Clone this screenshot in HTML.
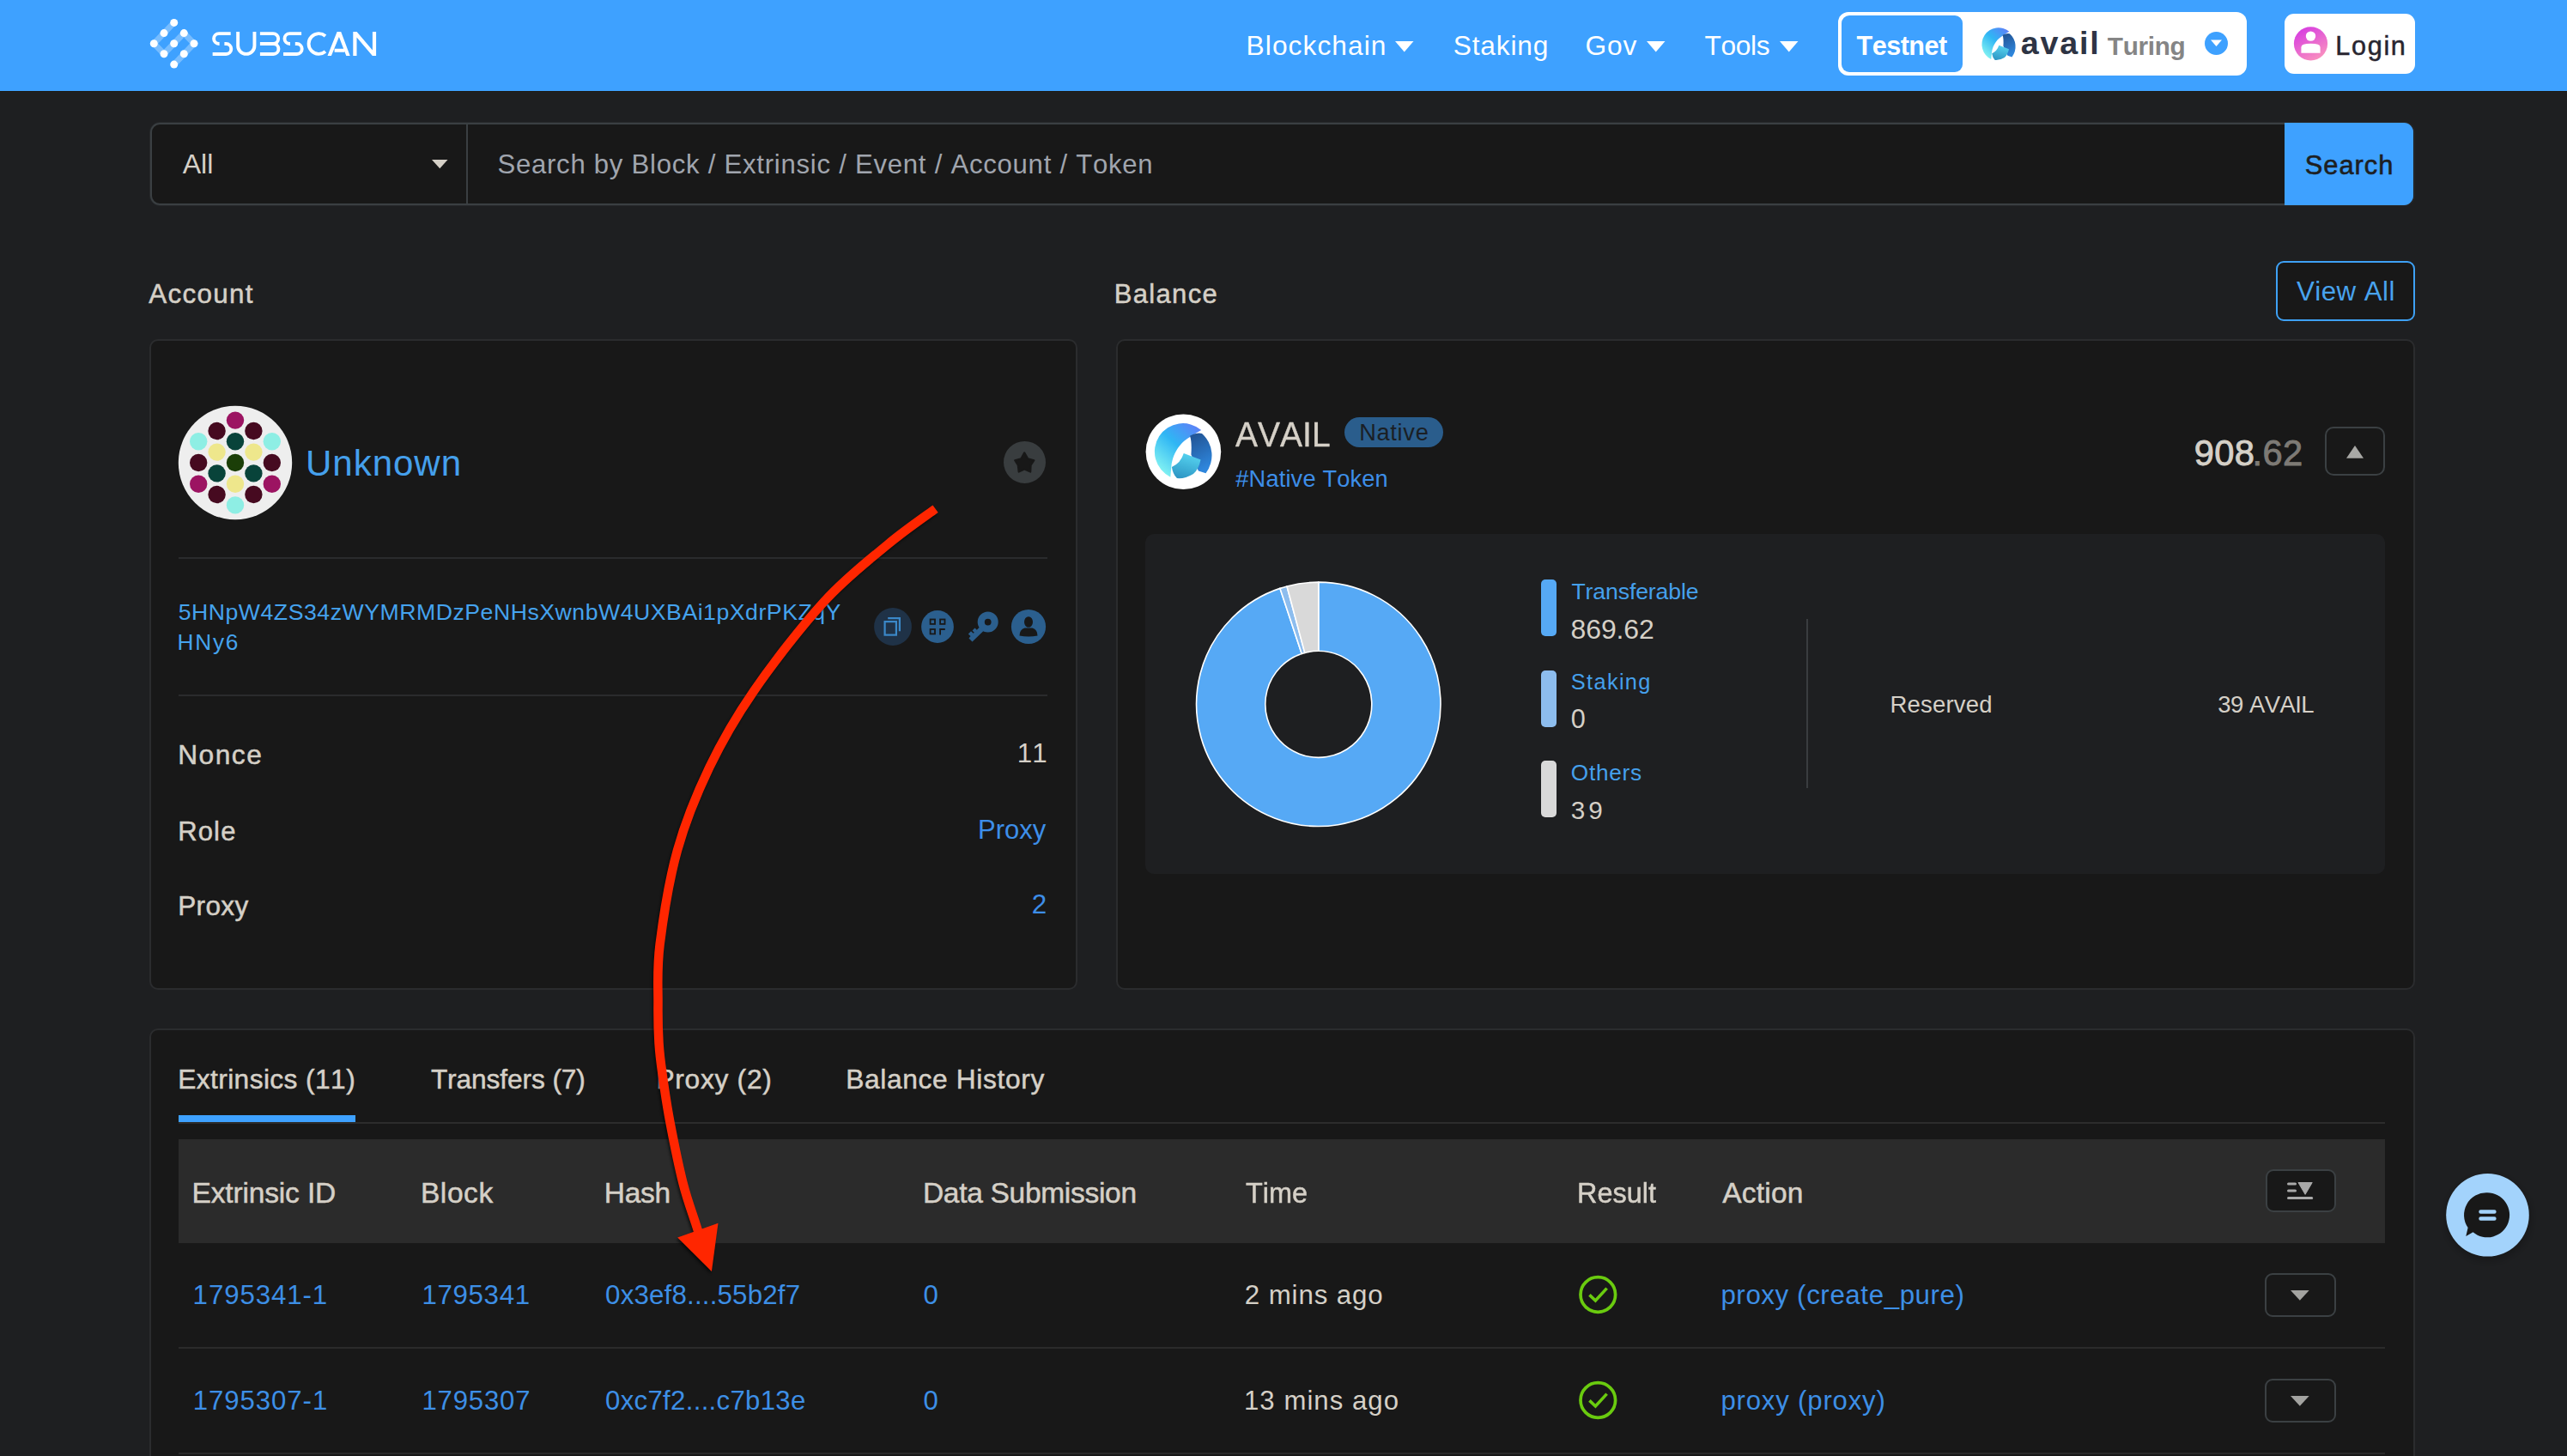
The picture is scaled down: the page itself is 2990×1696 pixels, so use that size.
<!DOCTYPE html><html><head><meta charset="utf-8"><style>
html,body{margin:0;padding:0;}
body{width:2990px;height:1696px;overflow:hidden;position:relative;background:#1e1f21;font-family:"Liberation Sans",sans-serif;}
.t{position:absolute;white-space:pre;font-kerning:none;font-feature-settings:"kern" 0;}
.r{position:absolute;box-sizing:border-box;}
svg{position:absolute;overflow:visible;}
</style></head><body>
<div class="r" style="left:0.00px;top:0.00px;width:2990.00px;height:106.00px;background:#3ea1ff"></div>
<div class="r" style="left:0.00px;top:106.00px;width:2990.00px;height:1.00px;background:#1c1a15"></div>
<svg style="left:0;top:0" width="500" height="105" viewBox="0 0 500 105">
<path d="M202.7,26.4 L179.3,50.7 L191,62.8 L214.3,38.6 L226,50.7 L202.7,75.1" fill="none" stroke="rgba(255,255,255,0.3)" stroke-width="7" stroke-linejoin="miter"/>
<g fill="#fff">
<circle cx="202.7" cy="26.4" r="4.5"/><circle cx="191" cy="38.6" r="4.5"/><circle cx="214.3" cy="38.6" r="4.5"/>
<circle cx="179.3" cy="50.7" r="4.5"/><circle cx="202.7" cy="50.7" r="4.5"/><circle cx="226" cy="50.7" r="4.5"/>
<circle cx="191" cy="62.8" r="4.5"/><circle cx="214.3" cy="62.8" r="4.5"/><circle cx="202.7" cy="75.1" r="4.5"/>
</g>
<g fill="none" stroke="#fff" stroke-width="3.9" stroke-linecap="butt">
<path d="M268.7,39.1 H255 A5.9,5.9 0 0 0 255,50.95 H255.6 M261.4,51.05 H263.35 A5.95,5.95 0 0 1 263.35,62.95 H247.65"/>
<path d="M277.15,37.1 V53.2 A9.65,9.65 0 0 0 296.45,53.2 V37.1"/>
<path d="M302.9,39.1 H318.2 A5.97,5.97 0 0 1 318.2,51.05 H302.9 M318.5,51.05 A5.95,5.95 0 0 1 318.5,62.95 H302.9"/>
<path d="M351.1,39.1 H337.4 A5.9,5.9 0 0 0 337.4,50.95 H338 M343.8,51.05 H345.75 A5.95,5.95 0 0 1 345.75,62.95 H330.05"/>
<path d="M379,41.9 A11.85,11.85 0 1 0 379,60.1"/>
</g>
<path fill="#fff" d="M381.5,64.9 L392.6,37.1 L397.2,37.1 L407.7,64.9 L403.3,64.9 L394.9,42.9 L385.9,64.9 Z M389.6,56.7 H401.2 V60.8 H389.6 Z"/>
<path fill="#fff" d="M411.3,64.9 V37.1 H415.6 L433.9,58.6 V37.1 H438.1 V64.9 H433.8 L415.5,43.4 V64.9 Z"/>
</svg>
<div class="t" style="left:1451.60px;top:38.00px;font-size:31.70px;line-height:31.70px;letter-spacing:1.063px;color:#ffffff;">Blockchain</div>
<svg style="left:1625px;top:48px" width="22" height="13" viewBox="0 0 22 13"><path d="M0,0 H21.5 L10.75,12.5 Z" fill="#fff"/></svg>
<div class="t" style="left:1692.76px;top:38.00px;font-size:31.70px;line-height:31.70px;letter-spacing:0.809px;color:#ffffff;">Staking</div>
<div class="t" style="left:1846.61px;top:38.00px;font-size:31.70px;line-height:31.70px;letter-spacing:0.833px;color:#ffffff;">Gov</div>
<svg style="left:1918px;top:48px" width="22" height="13" viewBox="0 0 22 13"><path d="M0,0 H21.5 L10.75,12.5 Z" fill="#fff"/></svg>
<div class="t" style="left:1985.49px;top:38.00px;font-size:31.70px;line-height:31.70px;letter-spacing:-0.364px;color:#ffffff;">Tools</div>
<svg style="left:2072.5px;top:48px" width="22" height="13" viewBox="0 0 22 13"><path d="M0,0 H21.5 L10.75,12.5 Z" fill="#fff"/></svg>
<div class="r" style="left:2141.00px;top:14.00px;width:476.00px;height:74.00px;background:#fff;border-radius:12px"></div>
<div class="r" style="left:2145.00px;top:18.00px;width:141.00px;height:66.00px;background:#3ea1ff;border-radius:9px"></div>
<div class="t" style="left:2162.46px;top:38.00px;font-size:30.58px;line-height:30.58px;letter-spacing:-0.503px;color:#ffffff;font-weight:bold;">Testnet</div>
<svg style="left:2300px;top:25px" width="60" height="55" viewBox="2300 25 60 55"><defs>
<linearGradient id="hlA" x1="0.8" y1="0" x2="0.1" y2="0.9"><stop offset="0" stop-color="#5a84f7"/><stop offset="0.45" stop-color="#2fb6f4"/><stop offset="1" stop-color="#86f5f2"/></linearGradient>
<linearGradient id="hlB" x1="0" y1="0" x2="0.3" y2="1"><stop offset="0" stop-color="#21508f"/><stop offset="1" stop-color="#2e86dc"/></linearGradient>
<linearGradient id="hlC" x1="0.6" y1="0" x2="0.3" y2="1"><stop offset="0" stop-color="#56d3f0"/><stop offset="1" stop-color="#2d96c4"/></linearGradient>
</defs>
<g transform="translate(2328,51.8) scale(0.588)">
<path fill="url(#hlA)" d="M21,-25.4 A33,33 0 1 0 -14.9,29.4 L-13.9,17.6 C-12,-2 0,-13 7.8,-17.3 Q13,-21 21,-25.4 Z"/>
<path fill="url(#hlB)" d="M7.8,-18.6 Q16.8,-23.3 21.8,-21.3 A34,34 0 0 1 26.3,24.9 L17.7,22.2 L9.2,3.1 Q10.3,-11.3 7.8,-18.6 Z"/>
<path fill="url(#hlC)" d="M0.6,1.8 L20.4,9.1 Q17.8,20.7 11.8,25.7 Q1.8,31.7 -7.3,30.8 Q-12.2,25.7 -13.3,17.6 Q-3.2,13.7 0.6,1.8 Z"/>
</g></svg>
<div class="t" style="left:2353.70px;top:32.00px;font-size:37.65px;line-height:37.65px;letter-spacing:1.833px;color:#2e3444;font-weight:bold;">avail</div>
<div class="t" style="left:2454.87px;top:39.00px;font-size:29.74px;line-height:29.74px;letter-spacing:-0.333px;color:#858585;font-weight:bold;">Turing</div>
<svg style="left:2568px;top:37.4px" width="27" height="27" viewBox="0 0 27 27"><circle cx="13.5" cy="13.5" r="13.5" fill="#3ea1ff"/><path d="M7,9.5 H20 L13.5,17 Z" fill="#fff"/></svg>
<div class="r" style="left:2661.00px;top:16.00px;width:152.00px;height:70.00px;background:#fff;border-radius:11px"></div>
<svg style="left:2671px;top:30px" width="42" height="42" viewBox="0 0 42 42">
<defs><linearGradient id="lg1" x1="0.2" y1="0" x2="0.8" y2="1"><stop offset="0" stop-color="#d63ae2"/><stop offset="1" stop-color="#fb95bd"/></linearGradient></defs>
<circle cx="20.5" cy="20.8" r="19.6" fill="url(#lg1)"/>
<circle cx="20.5" cy="12.1" r="5.7" fill="#fff"/>
<path d="M9.4,31.7 V25 Q9.4,20.8 20.5,20.8 Q31.6,20.8 31.6,25 V31.7 Z" fill="#fff"/>
</svg>
<div class="t" style="left:2720.29px;top:38.00px;font-size:30.58px;line-height:30.58px;letter-spacing:1.695px;color:#28252f;-webkit-text-stroke:0.50px #28252f;">Login</div>
<div class="r" style="left:173.50px;top:141.50px;width:2639.50px;height:98.50px;border:1.5px solid #27292b;border-radius:12px"></div>
<div class="r" style="left:175.00px;top:143.00px;width:2636.00px;height:95.50px;background:#181818;border:2px solid #3a3f42;border-radius:11px"></div>
<div class="r" style="left:542.90px;top:145.00px;width:2.00px;height:91.50px;background:#3a3f42"></div>
<div class="t" style="left:212.64px;top:175.00px;font-size:32.12px;line-height:32.12px;letter-spacing:0.008px;color:#d5d0c7;">All</div>
<svg style="left:502.8px;top:185.8px" width="19" height="11" viewBox="0 0 19 11"><path d="M0,0 H18.5 L9.25,10.3 Z" fill="#d5d0c7"/></svg>
<div class="t" style="left:579.39px;top:176.00px;font-size:31.14px;line-height:31.14px;letter-spacing:0.740px;color:#a0a5ae;">Search by Block / Extrinsic / Event / Account / Token</div>
<div class="r" style="left:2661.00px;top:143.00px;width:150.00px;height:95.50px;background:#3ea1ff;border-radius:0 11px 11px 0"></div>
<div class="t" style="left:2684.80px;top:178.00px;font-size:30.86px;line-height:30.86px;letter-spacing:0.947px;color:#1d1f22;-webkit-text-stroke:0.60px #1d1f22;">Search</div>
<div class="t" style="left:173.24px;top:327.00px;font-size:31.42px;line-height:31.42px;letter-spacing:1.295px;color:#d5d0c7;-webkit-text-stroke:0.50px #d5d0c7;">Account</div>
<div class="t" style="left:1297.66px;top:327.00px;font-size:31.00px;line-height:31.00px;letter-spacing:1.350px;color:#d5d0c7;-webkit-text-stroke:0.50px #d5d0c7;">Balance</div>
<div class="r" style="left:2651.00px;top:304.00px;width:162.00px;height:69.50px;background:#181818;border:2px solid #3ea1f5;border-radius:9px"></div>
<div class="t" style="left:2674.96px;top:324.00px;font-size:31.28px;line-height:31.28px;letter-spacing:0.455px;color:#48a3ee;">View All</div>
<div class="r" style="left:173.50px;top:395.00px;width:1081.00px;height:758.00px;background:#181818;border:2px solid #2b2c2e;border-radius:10px"></div>
<svg style="left:0;top:0" width="400" height="700" viewBox="0 0 400 700"><circle cx="274" cy="539" r="66.2" fill="#eeeeee"/><circle cx="274.0" cy="489.6" r="10.2" fill="#9c1462"/><circle cx="252.6" cy="502.0" r="10.2" fill="#460a20"/><circle cx="295.4" cy="502.0" r="10.2" fill="#460a20"/><circle cx="231.2" cy="514.3" r="10.2" fill="#8eeee4"/><circle cx="274.0" cy="514.3" r="10.2" fill="#08433a"/><circle cx="316.8" cy="514.3" r="10.2" fill="#8eeee4"/><circle cx="252.6" cy="526.6" r="10.2" fill="#eee78c"/><circle cx="295.4" cy="526.6" r="10.2" fill="#eee78c"/><circle cx="231.2" cy="539.0" r="10.2" fill="#460a20"/><circle cx="274.0" cy="539.0" r="10.2" fill="#1b3e08"/><circle cx="316.8" cy="539.0" r="10.2" fill="#460a20"/><circle cx="252.6" cy="551.4" r="10.2" fill="#08433a"/><circle cx="295.4" cy="551.4" r="10.2" fill="#08433a"/><circle cx="231.2" cy="563.7" r="10.2" fill="#9c1462"/><circle cx="274.0" cy="563.7" r="10.2" fill="#eee78c"/><circle cx="316.8" cy="563.7" r="10.2" fill="#9c1462"/><circle cx="252.6" cy="576.0" r="10.2" fill="#460a20"/><circle cx="295.4" cy="576.0" r="10.2" fill="#460a20"/><circle cx="274.0" cy="588.4" r="10.2" fill="#8eeee4"/></svg>
<div class="t" style="left:355.95px;top:519.00px;font-size:42.08px;line-height:42.08px;letter-spacing:0.959px;color:#45a0ec;">Unknown</div>
<svg style="left:1160px;top:505px" width="70" height="70" viewBox="1160 505 70 70">
<circle cx="1193.5" cy="538.4" r="24.5" fill="#393d3f"/>
<path d="M1193.2,527.4 L1197.2,534.2 L1204.4,536.2 L1200.6,541.8 L1200.2,549.6 L1193.2,546.6 L1186.7,549.6 L1185.8,541.8 L1182.2,536.2 L1189.4,534.2 Z" fill="#181818" stroke="#181818" stroke-width="2.2" stroke-linejoin="round"/>
</svg>
<div class="r" style="left:208.00px;top:648.80px;width:1012.00px;height:2.00px;background:#2a2b2d"></div>
<div class="t" style="left:207.63px;top:700.00px;font-size:26.65px;line-height:26.65px;letter-spacing:0.526px;color:#45a3ee;">5HNpW4ZS34zWYMRMDzPeNHsXwnbW4UXBAi1pXdrPKZqY</div>
<div class="t" style="left:206.55px;top:735.00px;font-size:26.23px;line-height:26.23px;letter-spacing:1.773px;color:#45a3ee;">HNy6</div>
<svg style="left:1000px;top:690px" width="240" height="80" viewBox="1000 690 240 80">
<circle cx="1040" cy="730" r="21.9" fill="#1f3247"/>
<path d="M1034.2,720.1 H1047.9 V735.3" fill="none" stroke="#3b88c8" stroke-width="2.2"/>
<rect x="1030.6" y="724.1" width="13.3" height="15.5" fill="none" stroke="#3b88c8" stroke-width="2.2"/>
<circle cx="1092" cy="730" r="18.9" fill="#2b5f8e"/>
<g fill="none" stroke="#181818" stroke-width="1.8">
<rect x="1083.6" y="721.5" width="5.4" height="5.4"/><rect x="1095.1" y="721.5" width="5.4" height="5.4"/><rect x="1083.6" y="733" width="5.4" height="5.4"/>
<path d="M1095.1,739.4 V733 H1100.8"/>
</g>
<path fill="#2b5f8e" fill-rule="evenodd" d="M1150.7,712.6 A12,12 0 1 1 1150.7,736.6 A12,12 0 1 1 1150.7,712.6 Z M1150.7,720.7 A3.9,3.9 0 1 0 1150.7,728.5 A3.9,3.9 0 1 0 1150.7,720.7 Z"/>
<path fill="#2b5f8e" d="M1141,730.5 L1145.5,735 L1132.5,747.5 L1128.5,743.5 L1130.5,741 L1127.8,738.5 L1131,735.3 L1133.7,737.8 L1134.8,736.7 L1132.5,734.5 L1135.5,731.5 L1137.8,733.7 Z"/>
<circle cx="1198" cy="730" r="20.1" fill="#2b5f8e"/>
<ellipse cx="1198" cy="724.5" rx="5" ry="6.3" fill="#181818"/>
<path d="M1187.5,740.5 Q1187.5,733.5 1193.5,731.5 L1202.5,731.5 Q1208.5,733.5 1208.5,740.5 Q1198,742.5 1187.5,740.5 Z" fill="#181818"/>
</svg>
<div class="r" style="left:208.00px;top:808.60px;width:1012.00px;height:2.00px;background:#2a2b2d"></div>
<div class="t" style="left:207.20px;top:864.00px;font-size:31.70px;line-height:31.70px;letter-spacing:1.495px;color:#d5d0c7;-webkit-text-stroke:0.50px #d5d0c7;">Nonce</div>
<div class="t" style="left:207.26px;top:953.00px;font-size:31.00px;line-height:31.00px;letter-spacing:1.123px;color:#d5d0c7;-webkit-text-stroke:0.50px #d5d0c7;">Role</div>
<div class="t" style="left:207.21px;top:1040.00px;font-size:31.56px;line-height:31.56px;letter-spacing:0.345px;color:#d5d0c7;-webkit-text-stroke:0.50px #d5d0c7;">Proxy</div>
<div class="t" style="left:1184.71px;top:862.00px;font-size:31.42px;line-height:31.42px;letter-spacing:0.080px;color:#d5d0c7;">11</div>
<div class="t" style="left:1139.06px;top:951.00px;font-size:31.00px;line-height:31.00px;letter-spacing:-0.008px;color:#3d8ee8;">Proxy</div>
<div class="t" style="left:1201.82px;top:1038.00px;font-size:31.42px;line-height:31.42px;letter-spacing:0.000px;color:#3d8ee8;">2</div>
<div class="r" style="left:1299.50px;top:395.00px;width:1513.00px;height:758.00px;background:#181818;border:2px solid #2b2c2e;border-radius:10px"></div>
<svg style="left:1330px;top:478px" width="100" height="100" viewBox="1330 478 100 100"><circle cx="1378.4" cy="526.2" r="43.8" fill="#fff"/><defs>
<linearGradient id="blA" x1="0.8" y1="0" x2="0.1" y2="0.9"><stop offset="0" stop-color="#5a84f7"/><stop offset="0.45" stop-color="#2fb6f4"/><stop offset="1" stop-color="#86f5f2"/></linearGradient>
<linearGradient id="blB" x1="0" y1="0" x2="0.3" y2="1"><stop offset="0" stop-color="#21508f"/><stop offset="1" stop-color="#2e86dc"/></linearGradient>
<linearGradient id="blC" x1="0.6" y1="0" x2="0.3" y2="1"><stop offset="0" stop-color="#56d3f0"/><stop offset="1" stop-color="#2d96c4"/></linearGradient>
</defs>
<g transform="translate(1378.2,526.3) scale(1)">
<path fill="url(#blA)" d="M21,-25.4 A33,33 0 1 0 -14.9,29.4 L-13.9,17.6 C-12,-2 0,-13 7.8,-17.3 Q13,-21 21,-25.4 Z"/>
<path fill="url(#blB)" d="M7.8,-18.6 Q16.8,-23.3 21.8,-21.3 A34,34 0 0 1 26.3,24.9 L17.7,22.2 L9.2,3.1 Q10.3,-11.3 7.8,-18.6 Z"/>
<path fill="url(#blC)" d="M0.6,1.8 L20.4,9.1 Q17.8,20.7 11.8,25.7 Q1.8,31.7 -7.3,30.8 Q-12.2,25.7 -13.3,17.6 Q-3.2,13.7 0.6,1.8 Z"/>
</g></svg>
<div class="t" style="left:1439.32px;top:485.00px;font-size:41.52px;line-height:41.52px;letter-spacing:0.000px;color:#d5d0c7;-webkit-text-stroke:0.40px #d5d0c7;transform:scaleX(0.9394);transform-origin:0.08px 0;">AVAIL</div>
<div class="r" style="left:1565.80px;top:486.20px;width:114.80px;height:34.50px;background:#2a5d8c;border-radius:17.5px"></div>
<div class="t" style="left:1583.17px;top:490.00px;font-size:27.21px;line-height:27.21px;letter-spacing:0.703px;color:#1a1f25;">Native</div>
<div class="t" style="left:1439.28px;top:544.00px;font-size:27.21px;line-height:27.21px;letter-spacing:0.170px;color:#3d8ee8;">#Native Token</div>
<div class="t" style="left:2555.65px;top:507.00px;font-size:41.66px;line-height:41.66px;letter-spacing:0.329px;color:#d5d0c7;-webkit-text-stroke:0.90px #d5d0c7;">908</div>
<div class="t" style="left:2623.40px;top:507.00px;font-size:41.66px;line-height:41.66px;letter-spacing:0.494px;color:#7d7a75;-webkit-text-stroke:0.90px #7d7a75;">.62</div>
<div class="r" style="left:2708.30px;top:497.30px;width:69.30px;height:56.30px;border:2px solid #3b4043;border-radius:10px"></div>
<svg style="left:2733px;top:518.9px" width="21" height="15" viewBox="0 0 21 15"><path d="M0,14.7 H20 L10,0 Z" fill="#a8a8a5"/></svg>
<div class="r" style="left:1334.00px;top:621.80px;width:1444.00px;height:395.80px;background:#1e1f21;border-radius:10px"></div>
<svg style="left:1380px;top:665px" width="320" height="320" viewBox="1380 665 320 320"><path d="M1535.80,678.10 A142.20,142.20 0 1 1 1490.91,685.37 L1516.23,761.47 A62.00,62.00 0 1 0 1535.80,758.30 Z" fill="#56a9f5" stroke="#fff" stroke-width="1.6" stroke-linejoin="round"/><path d="M1490.91,685.37 A142.20,142.20 0 0 1 1499.00,682.95 L1519.75,760.41 A62.00,62.00 0 0 0 1516.23,761.47 Z" fill="#8dbdee" stroke="#fff" stroke-width="1.6" stroke-linejoin="round"/><path d="M1499.00,682.95 A142.20,142.20 0 0 1 1535.80,678.10 L1535.80,758.30 A62.00,62.00 0 0 0 1519.75,760.41 Z" fill="#d9d9d9" stroke="#fff" stroke-width="1.6" stroke-linejoin="round"/></svg>
<div class="r" style="left:1795.20px;top:674.80px;width:17.80px;height:66.10px;background:#56a9f5;border-radius:5px"></div>
<div class="r" style="left:1795.20px;top:780.80px;width:17.80px;height:66.00px;background:#8dbdee;border-radius:5px"></div>
<div class="r" style="left:1795.20px;top:885.80px;width:17.80px;height:66.40px;background:#d9d9d9;border-radius:5px"></div>
<div class="t" style="left:1830.40px;top:676.00px;font-size:26.65px;line-height:26.65px;letter-spacing:-0.120px;color:#45a0ec;">Transferable</div>
<div class="t" style="left:1829.61px;top:717.00px;font-size:31.98px;line-height:31.98px;letter-spacing:-0.123px;color:#d5d0c7;">869.62</div>
<div class="t" style="left:1829.85px;top:782.00px;font-size:25.39px;line-height:25.39px;letter-spacing:1.318px;color:#45a0ec;">Staking</div>
<div class="t" style="left:1829.81px;top:822.00px;font-size:30.58px;line-height:30.58px;letter-spacing:0.000px;color:#d5d0c7;">0</div>
<div class="t" style="left:1829.76px;top:887.00px;font-size:26.23px;line-height:26.23px;letter-spacing:0.736px;color:#45a0ec;">Others</div>
<div class="t" style="left:1829.87px;top:929.00px;font-size:29.74px;line-height:29.74px;letter-spacing:3.766px;color:#d5d0c7;">39</div>
<div class="r" style="left:2104.30px;top:720.60px;width:2.00px;height:197.90px;background:#3a3d40"></div>
<div class="t" style="left:2201.54px;top:807.00px;font-size:27.49px;line-height:27.49px;letter-spacing:0.196px;color:#d5d0c7;">Reserved</div>
<div class="t" style="left:2583.35px;top:807.00px;font-size:27.49px;line-height:27.49px;letter-spacing:-0.556px;color:#d5d0c7;">39 AVAIL</div>
<div class="r" style="left:173.50px;top:1198.00px;width:2639.50px;height:562.00px;background:#181818;border:2px solid #2b2c2e;border-radius:10px"></div>
<div class="t" style="left:207.20px;top:1242.00px;font-size:31.70px;line-height:31.70px;letter-spacing:0.412px;color:#d5d0c7;-webkit-text-stroke:0.50px #d5d0c7;">Extrinsics (11)</div>
<div class="t" style="left:501.89px;top:1242.00px;font-size:31.70px;line-height:31.70px;letter-spacing:-0.112px;color:#d5d0c7;-webkit-text-stroke:0.50px #d5d0c7;">Transfers (7)</div>
<div class="t" style="left:764.40px;top:1242.00px;font-size:31.70px;line-height:31.70px;letter-spacing:0.736px;color:#d5d0c7;-webkit-text-stroke:0.50px #d5d0c7;">Proxy (2)</div>
<div class="t" style="left:985.20px;top:1242.00px;font-size:31.70px;line-height:31.70px;letter-spacing:0.655px;color:#d5d0c7;-webkit-text-stroke:0.50px #d5d0c7;">Balance History</div>
<div class="r" style="left:208.00px;top:1307.00px;width:2570.00px;height:1.60px;background:#2c2c2c"></div>
<div class="r" style="left:208.00px;top:1298.90px;width:206.00px;height:8.10px;background:#3ea1ff"></div>
<div class="r" style="left:208.00px;top:1326.70px;width:2570.00px;height:121.30px;background:#2b2b2b"></div>
<div class="t" style="left:223.45px;top:1373.00px;font-size:33.52px;line-height:33.52px;letter-spacing:-0.149px;color:#d5d0c7;-webkit-text-stroke:0.50px #d5d0c7;">Extrinsic ID</div>
<div class="t" style="left:489.95px;top:1373.00px;font-size:33.52px;line-height:33.52px;letter-spacing:0.582px;color:#d5d0c7;-webkit-text-stroke:0.50px #d5d0c7;">Block</div>
<div class="t" style="left:703.75px;top:1373.00px;font-size:33.52px;line-height:33.52px;letter-spacing:-0.277px;color:#d5d0c7;-webkit-text-stroke:0.50px #d5d0c7;">Hash</div>
<div class="t" style="left:1074.95px;top:1373.00px;font-size:33.52px;line-height:33.52px;letter-spacing:-0.305px;color:#d5d0c7;-webkit-text-stroke:0.50px #d5d0c7;">Data Submission</div>
<div class="t" style="left:1450.55px;top:1373.00px;font-size:33.52px;line-height:33.52px;letter-spacing:0.000px;color:#d5d0c7;-webkit-text-stroke:0.50px #d5d0c7;transform:scaleX(0.9675);transform-origin:0.75px 0;">Time</div>
<div class="t" style="left:1837.25px;top:1373.00px;font-size:33.52px;line-height:33.52px;letter-spacing:0.000px;color:#d5d0c7;-webkit-text-stroke:0.50px #d5d0c7;transform:scaleX(0.9671);transform-origin:2.75px 0;">Result</div>
<div class="t" style="left:2006.13px;top:1373.00px;font-size:33.52px;line-height:33.52px;letter-spacing:0.235px;color:#d5d0c7;-webkit-text-stroke:0.50px #d5d0c7;">Action</div>
<div class="r" style="left:2638.50px;top:1362.20px;width:82.20px;height:50.10px;background:#181818;border:2px solid #3b4043;border-radius:9px"></div>
<svg style="left:2660px;top:1372px" width="40" height="30" viewBox="2660 1372 40 30">
<g stroke="#a9a9a9" stroke-width="3" stroke-linecap="round"><path d="M2665.5,1379 H2673.5 M2665.5,1387 H2673.5 M2665.5,1395.4 H2692.7"/></g>
<path d="M2677,1377.5 H2693.2 L2685.1,1391.3 Z" fill="#a9a9a9" stroke="#a9a9a9" stroke-width="1" stroke-linejoin="round"/>
</svg>
<div class="t" style="left:224.62px;top:1493.00px;font-size:31.28px;line-height:31.28px;letter-spacing:0.891px;color:#3d8fe6;">1795341-1</div>
<div class="t" style="left:491.42px;top:1493.00px;font-size:31.28px;line-height:31.28px;letter-spacing:0.657px;color:#3d8fe6;">1795341</div>
<div class="t" style="left:705.08px;top:1493.00px;font-size:31.28px;line-height:31.28px;letter-spacing:0.184px;color:#3d8fe6;">0x3ef8....55b2f7</div>
<div class="t" style="left:1075.48px;top:1493.00px;font-size:31.28px;line-height:31.28px;letter-spacing:0.000px;color:#3d8fe6;">0</div>
<div class="t" style="left:1449.83px;top:1493.00px;font-size:31.28px;line-height:31.28px;letter-spacing:0.876px;color:#d5d0c7;">2 mins ago</div>
<div class="t" style="left:2004.38px;top:1493.00px;font-size:31.28px;line-height:31.28px;letter-spacing:0.601px;color:#3d8fe6;">proxy (create_pure)</div>
<svg style="left:1830px;top:1477.4px" width="62" height="62" viewBox="1830 1477.4 62 62"><circle cx="1861.3" cy="1508.4" r="20.3" fill="none" stroke="#6acb0f" stroke-width="3.7"/><path d="M1851.4,1508.8 L1858.4,1515.4 L1871.6,1501.0" fill="none" stroke="#6acb0f" stroke-width="3.6"/></svg>
<div class="r" style="left:2638.20px;top:1483.10px;width:82.50px;height:50.80px;border:2px solid #3b4043;border-radius:9px"></div>
<svg style="left:2668px;top:1503.0px" width="22" height="13" viewBox="0 0 22 13"><path d="M0,0 H21.7 L10.85,11.8 Z" fill="#a3a3a0"/></svg>
<div class="t" style="left:224.63px;top:1616.00px;font-size:31.14px;line-height:31.14px;letter-spacing:0.973px;color:#3d8fe6;">1795307-1</div>
<div class="t" style="left:491.43px;top:1616.00px;font-size:31.14px;line-height:31.14px;letter-spacing:0.819px;color:#3d8fe6;">1795307</div>
<div class="t" style="left:705.08px;top:1616.00px;font-size:31.14px;line-height:31.14px;letter-spacing:0.320px;color:#3d8fe6;">0xc7f2....c7b13e</div>
<div class="t" style="left:1075.48px;top:1616.00px;font-size:31.14px;line-height:31.14px;letter-spacing:0.000px;color:#3d8fe6;">0</div>
<div class="t" style="left:1449.03px;top:1616.00px;font-size:31.14px;line-height:31.14px;letter-spacing:1.045px;color:#d5d0c7;">13 mins ago</div>
<div class="t" style="left:2004.39px;top:1616.00px;font-size:31.14px;line-height:31.14px;letter-spacing:0.822px;color:#3d8fe6;">proxy (proxy)</div>
<svg style="left:1830px;top:1600.2px" width="62" height="62" viewBox="1830 1600.2 62 62"><circle cx="1861.3" cy="1631.2" r="20.3" fill="none" stroke="#6acb0f" stroke-width="3.7"/><path d="M1851.4,1631.6 L1858.4,1638.2 L1871.6,1623.8" fill="none" stroke="#6acb0f" stroke-width="3.6"/></svg>
<div class="r" style="left:2638.20px;top:1606.40px;width:82.50px;height:50.80px;border:2px solid #3b4043;border-radius:9px"></div>
<svg style="left:2668px;top:1626.3px" width="22" height="13" viewBox="0 0 22 13"><path d="M0,0 H21.7 L10.85,11.8 Z" fill="#a3a3a0"/></svg>
<div class="r" style="left:208.00px;top:1568.50px;width:2570.00px;height:2.00px;background:#2a2a2a"></div>
<div class="r" style="left:208.00px;top:1691.80px;width:2570.00px;height:2.00px;background:#2a2a2a"></div>
<svg style="left:2830px;top:1350px" width="140" height="140" viewBox="2830 1350 140 140">
<defs><filter id="sh" x="-50%" y="-50%" width="200%" height="200%"><feGaussianBlur stdDeviation="5"/></filter></defs>
<circle cx="2898" cy="1419" r="50" fill="rgba(0,0,0,0.22)" filter="url(#sh)"/>
<circle cx="2897.5" cy="1415.3" r="48.3" fill="#a3d3fc"/>
<path d="M2897.2,1389.3 A26,26 0 1 1 2880.5,1435.3 L2872.3,1440 L2874.6,1430 A26,26 0 0 1 2897.2,1389.3 Z" fill="#181818"/>
<g stroke="#a3d3fc" stroke-width="4.5" stroke-linecap="round"><path d="M2889.5,1411.6 H2905.4 M2889.5,1419.5 H2905.4"/></g>
</svg>
<svg style="left:0;top:0" width="2990" height="1696" viewBox="0 0 2990 1696">
<defs><filter id="ash" x="-20%" y="-20%" width="140%" height="140%"><feGaussianBlur stdDeviation="1.5"/></filter></defs>
<g transform="translate(-1.5,2.5)" opacity="0.55" filter="url(#ash)">
<path d="M1089.6,592.7 C1080.3,599.6 1055.7,616.2 1034.0,634.2 C1012.4,652.2 985.7,672.5 959.7,701.0 C933.7,729.5 900.2,772.7 878.0,804.9 C855.8,837.1 841.0,863.1 826.2,894.0 C811.4,924.9 798.6,956.1 789.0,990.4 C779.4,1024.7 772.4,1070.1 768.6,1100.0 C764.9,1129.9 766.7,1150.8 766.5,1170.0 C766.3,1189.2 766.7,1201.8 767.5,1215.0 C768.3,1228.2 769.1,1234.2 771.3,1249.5 C773.4,1264.8 776.3,1285.5 780.4,1307.0 C784.5,1328.5 790.6,1358.7 795.6,1378.4 C800.6,1398.1 806.3,1412.7 810.2,1425.0 C814.1,1437.3 817.5,1447.5 819.0,1452.0" fill="none" stroke="#000" stroke-width="10.5"/>
<path d="M789.2,1441.4 L836.5,1424.8 L828.9,1481.1 Z" fill="#000"/>
</g>
<path d="M1089.6,592.7 C1080.3,599.6 1055.7,616.2 1034.0,634.2 C1012.4,652.2 985.7,672.5 959.7,701.0 C933.7,729.5 900.2,772.7 878.0,804.9 C855.8,837.1 841.0,863.1 826.2,894.0 C811.4,924.9 798.6,956.1 789.0,990.4 C779.4,1024.7 772.4,1070.1 768.6,1100.0 C764.9,1129.9 766.7,1150.8 766.5,1170.0 C766.3,1189.2 766.7,1201.8 767.5,1215.0 C768.3,1228.2 769.1,1234.2 771.3,1249.5 C773.4,1264.8 776.3,1285.5 780.4,1307.0 C784.5,1328.5 790.6,1358.7 795.6,1378.4 C800.6,1398.1 806.3,1412.7 810.2,1425.0 C814.1,1437.3 817.5,1447.5 819.0,1452.0" fill="none" stroke="#ff2600" stroke-width="10.5"/>
<path d="M789.2,1441.4 L836.5,1424.8 L828.9,1481.1 Z" fill="#ff2600"/>
</svg>
</body></html>
